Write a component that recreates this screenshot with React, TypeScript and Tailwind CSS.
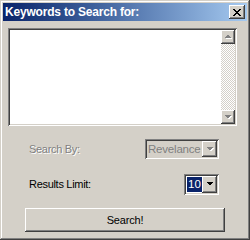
import React, { useState } from 'react';

const raised =
  'shadow-[inset_-1px_-1px_#404040,inset_1px_1px_#ffffff,inset_-2px_-2px_#808080,inset_2px_2px_#d4d0c8]';
const sunken =
  'shadow-[inset_1px_1px_#808080,inset_-1px_-1px_#ffffff,inset_2px_2px_#404040,inset_-2px_-2px_#d4d0c8]';

function Arrow({ dir, disabled }: { dir: 'up' | 'down'; disabled?: boolean }) {
  const pts = dir === 'up' ? '3,0 0,3 7,3 4,0' : '0,0 7,0 4,3 3,3';
  return (
    <svg width="8" height="5" viewBox="0 0 8 5" shapeRendering="crispEdges">
      {disabled && <polygon points={pts} transform="translate(1,1)" fill="#ffffff" />}
      <polygon points={pts} fill={disabled ? '#808080' : '#000000'} />
    </svg>
  );
}

function ComboButton({ disabled }: { disabled?: boolean }) {
  return (
    <div className={`w-[15px] h-full flex items-center justify-center bg-[#d4d0c8] ${raised}`}>
      <Arrow dir="down" disabled={disabled} />
    </div>
  );
}

export default function App() {
  const [keywords, setKeywords] = useState('');
  const [limit] = useState(10);

  return (
    <div className="w-[250px] h-[240px] bg-[#d4d0c8] p-[3px] flex flex-col shadow-[inset_-1px_-1px_#404040,inset_1px_1px_#d4d0c8,inset_-2px_-2px_#808080,inset_2px_2px_#ffffff] font-['Liberation_Sans',Arial,sans-serif] select-none">
      {/* title bar */}
      <div className="h-[18px] flex items-center justify-between pl-[2px] pr-[2px] bg-gradient-to-r from-[#0a246a] to-[#a6caf0]">
        <span className="text-white font-bold text-[12px] tracking-[-0.2px] leading-none">Keywords to Search for:</span>
        <button className={`w-[16px] h-[14px] flex items-center justify-center bg-[#d4d0c8] ${raised}`}>
          <svg width="8" height="7" viewBox="0 0 8 7" shapeRendering="crispEdges">
            <path d="M0 0h2v1h-2zM6 0h2v1h-2zM1 1h2v1h-2zM5 1h2v1h-2zM2 2h4v1h-4zM3 3h2v1h-2zM2 4h4v1h-4zM1 5h2v1h-2zM5 5h2v1h-2zM0 6h2v1h-2zM6 6h2v1h-2z" fill="#000" />
          </svg>
        </button>
      </div>

      {/* keywords box */}
      <div className={`mt-[7px] ml-[5px] w-[229px] h-[98px] p-[2px] bg-white flex ${sunken}`}>
        <textarea
          value={keywords}
          onChange={(e) => setKeywords(e.target.value)}
          className="flex-1 resize-none outline-none bg-white text-[11px] p-[1px]"
        />
        <div className="w-[14px] flex flex-col bg-[repeating-conic-gradient(#d4d0c8_0%_25%,#ffffff_0%_50%)] bg-[length:2px_2px]">
          <div className={`h-[14px] flex items-center justify-center bg-[#d4d0c8] ${raised}`}>
            <Arrow dir="up" disabled />
          </div>
          <div className="flex-1" />
          <div className={`h-[14px] flex items-center justify-center bg-[#d4d0c8] ${raised}`}>
            <Arrow dir="down" disabled />
          </div>
        </div>
      </div>

      {/* search by */}
      <div className="mt-[13px] h-[20px] pl-[26px] pr-[28px] flex items-center justify-between">
        <span className="text-[11px] tracking-[-0.3px] text-[#808080] [text-shadow:1px_1px_#ffffff]">Search By:</span>
        <div className={`w-[74px] h-[20px] p-[2px] flex bg-[#d4d0c8] ${sunken}`}>
          <span className="flex-1 pl-[1px] text-[11.5px] tracking-[-0.2px] leading-[16px] text-[#808080]">Revelance</span>
          <ComboButton disabled />
        </div>
      </div>

      {/* results limit */}
      <div className="mt-[15px] h-[21px] pl-[26px] pr-[28px] flex items-center justify-between">
        <span className="text-[11px] tracking-[-0.3px] text-black">Results Limit:</span>
        <div className={`w-[35px] h-[21px] p-[2px] flex bg-white ${sunken}`}>
          <div className="flex-1 flex items-center pl-[1px] py-[1px]">
            <span className="h-full w-full bg-[#0a246a] text-white text-[11.5px] leading-[15px] text-center">{limit}</span>
          </div>
          <ComboButton />
        </div>
      </div>

      {/* search button */}
      <button className={`mt-[13px] ml-[22px] w-[200px] h-[24px] bg-[#d4d0c8] text-black text-[11px] tracking-[-0.2px] ${raised}`}>
        Search!
      </button>
    </div>
  );
}
